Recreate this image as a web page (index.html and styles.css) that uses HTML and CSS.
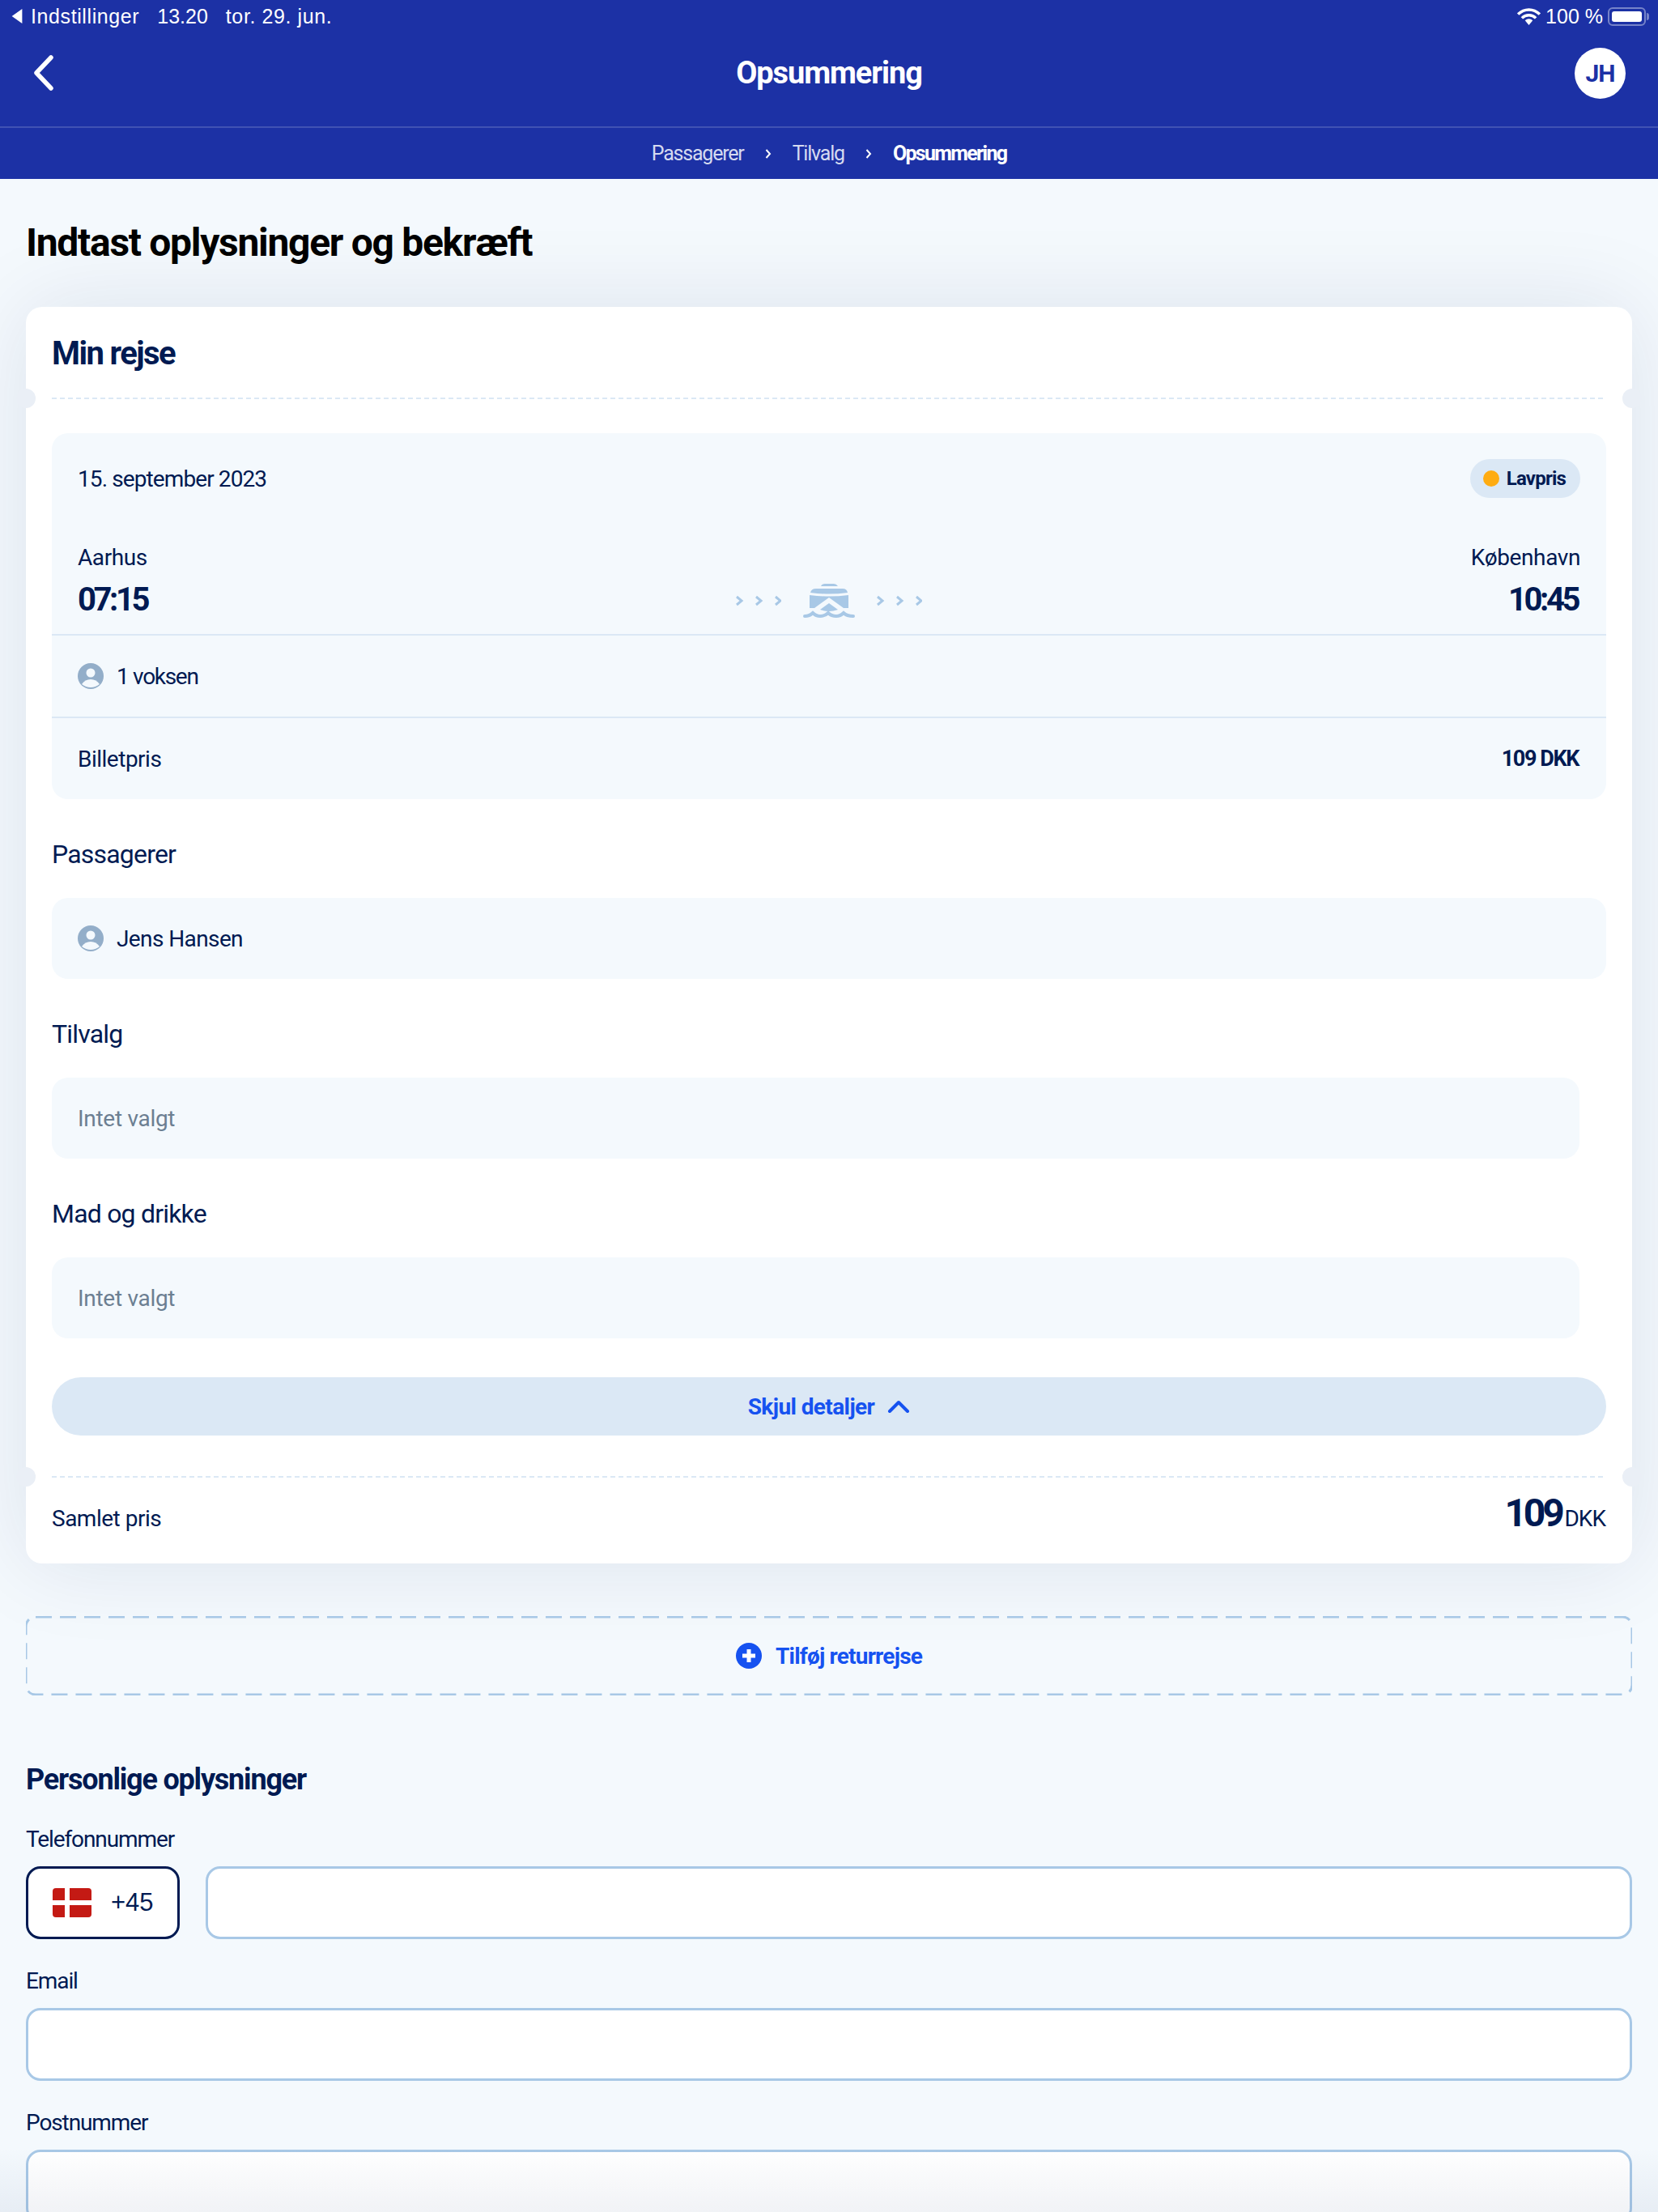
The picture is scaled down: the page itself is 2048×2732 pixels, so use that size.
FILE: index.html
```html
<!DOCTYPE html>
<html lang="da">
<head>
<meta charset="utf-8">
<title>Opsummering</title>
<link rel="stylesheet" href="styles.css">
</head>
<body>
<div class="page">
  <header class="app-header">
    <div class="status">
      <div class="status-left">
        <svg class="status-back" viewBox="0 0 16 22"><path d="M15 1 V21 L1 11 Z" fill="#fff"/></svg>
        <span class="status-wide">Indstillinger</span>
        <span>13.20</span>
        <span class="status-wide">tor. 29. jun.</span>
      </div>
      <div class="status-right">
        <svg class="wifi" viewBox="0 0 30 22"><path d="M1 8 C9 0 21 0 29 8 M6 13 C11 8 19 8 24 13" fill="none" stroke="#fff" stroke-width="3.6"/><path d="M10 16 C13 13 17 13 20 16 L15 22 Z" fill="#fff"/></svg>
        <span>100 %</span>
        <span class="battery"><span class="battery-fill"></span></span>
        <span class="battery-nub"></span>
      </div>
    </div>
    <div class="topbar">
      <svg class="back" viewBox="0 0 24 44"><path d="M21 3 L3 22 L21 41" fill="none" stroke="#fff" stroke-width="5.5" stroke-linecap="round" stroke-linejoin="round"/></svg>
      <h2 class="topbar-title">Opsummering</h2>
      <div class="avatar">JH</div>
    </div>
    <nav class="crumbs">
      <span>Passagerer</span>
      <svg class="crumb-sep" viewBox="0 0 8 14"><path d="M1.5 2 L6 7 L1.5 12" fill="none" stroke="#fff" stroke-width="2"/></svg>
      <span>Tilvalg</span>
      <svg class="crumb-sep" viewBox="0 0 8 14"><path d="M1.5 2 L6 7 L1.5 12" fill="none" stroke="#fff" stroke-width="2"/></svg>
      <strong>Opsummering</strong>
    </nav>
  </header>

  <main class="main">
    <h1 class="page-title">Indtast oplysninger og bekræft</h1>

    <section class="card">
      <h2 class="card-title">Min rejse</h2>
      <div class="ticket-line"><i class="notch notch-l"></i><i class="notch notch-r"></i></div>

      <div class="card-body">
        <div class="trip">
          <div class="trip-top">
            <div class="trip-date">15. september 2023</div>
            <div class="badge"><i class="badge-dot"></i>Lavpris</div>
          </div>
          <div class="route">
            <div class="stop">
              <div class="stop-name">Aarhus</div>
              <div class="stop-time">07:15</div>
            </div>
            <div class="route-mid">
              <svg class="chevs" viewBox="0 0 56 16"><path d="M1 3 L7 8 L1 13 M25 3 L31 8 L25 13 M49 3 L55 8 L49 13" fill="none" stroke="#a8c8e6" stroke-width="3"/></svg>
              <svg class="ferry" viewBox="0 0 64 44">
                <path d="M22 4 Q23 1 27 1 H38 Q41 1 43 4 Z" fill="#a8c8e6"/>
                <path d="M9 12 Q10 7 16 7 H49 Q54 7 55 12 Q32 15 9 12 Z" fill="#a8c8e6"/>
                <path d="M8 15 Q32 18 56 15 V31 H50 L32 18 L14 31 H8 Z" fill="#a8c8e6"/>
                <path d="M32 25 L43 33 Q37 35 32 35 Q27 35 21 33 Z" fill="#a8c8e6"/>
                <path d="M2 41 Q8 41 12 37 Q16 41 21 41 Q27 41 31 37 Q35 41 41 41 Q46 41 50 37 Q54 41 62 41" fill="none" stroke="#a8c8e6" stroke-width="4" stroke-linecap="round"/>
              </svg>
              <svg class="chevs" viewBox="0 0 56 16"><path d="M1 3 L7 8 L1 13 M25 3 L31 8 L25 13 M49 3 L55 8 L49 13" fill="none" stroke="#a8c8e6" stroke-width="3"/></svg>
            </div>
            <div class="stop stop-end">
              <div class="stop-name">København</div>
              <div class="stop-time">10:45</div>
            </div>
          </div>
          <div class="trip-row">
            <svg class="person" viewBox="0 0 32 32"><circle cx="16" cy="16" r="16" fill="#93aec9"/><circle cx="16" cy="12" r="5.5" fill="#f4f9fd"/><path d="M5 26 Q9 20 16 20 Q23 20 27 26 Q22 30 16 30 Q10 30 5 26 Z" fill="#f4f9fd"/></svg>
            <span class="voksen">1 voksen</span>
          </div>
          <div class="trip-row trip-row-price">
            <span>Billetpris</span>
            <strong>109 DKK</strong>
          </div>
        </div>

        <h3 class="group-title">Passagerer</h3>
        <div class="info-box info-box-wide">
          <svg class="person" viewBox="0 0 32 32"><circle cx="16" cy="16" r="16" fill="#93aec9"/><circle cx="16" cy="12" r="5.5" fill="#f4f9fd"/><path d="M5 26 Q9 20 16 20 Q23 20 27 26 Q22 30 16 30 Q10 30 5 26 Z" fill="#f4f9fd"/></svg>
          <span>Jens Hansen</span>
        </div>

        <h3 class="group-title">Tilvalg</h3>
        <div class="info-box info-box-muted">Intet valgt</div>

        <h3 class="group-title">Mad og drikke</h3>
        <div class="info-box info-box-muted">Intet valgt</div>

        <button class="toggle" type="button">
          <span>Skjul detaljer</span>
          <svg class="toggle-icon" viewBox="0 0 28 16"><path d="M3 14 L14 3 L25 14" fill="none" stroke="#1652f0" stroke-width="4" stroke-linecap="round" stroke-linejoin="round"/></svg>
        </button>
      </div>

      <div class="ticket-line ticket-line-low"><i class="notch notch-l"></i><i class="notch notch-r"></i></div>

      <div class="total">
        <span class="total-label">Samlet pris</span>
        <span class="total-price"><b>109</b> <small>DKK</small></span>
      </div>
    </section>

    <button class="add-return" type="button">
      <svg class="dash-frame" width="100%" height="100%"><rect x="0" y="1" width="100%" height="96" rx="12" fill="none" stroke="#a8c8e6" stroke-width="3" stroke-dasharray="20 10"/></svg>
      <svg class="plus" viewBox="0 0 32 32"><circle cx="16" cy="16" r="16" fill="#1652f0"/><path d="M16 8 V24 M8 16 H24" stroke="#fff" stroke-width="5"/></svg>
      <span>Tilføj returrejse</span>
    </button>

    <section class="form">
      <h2 class="form-title">Personlige oplysninger</h2>
      <div class="field">
        <label class="field-label">Telefonnummer</label>
        <div class="phone">
          <div class="country">
            <svg class="flag" viewBox="0 0 48 36"><rect width="48" height="36" rx="4" fill="#c41a14"/><path d="M15 0 H21 V36 H15 Z M0 15 H48 V21 H0 Z" fill="#fff"/></svg>
            <span>+45</span>
          </div>
          <div class="input input-grow"></div>
        </div>
      </div>
      <div class="field">
        <label class="field-label">Email</label>
        <div class="input"></div>
      </div>
      <div class="field">
        <label class="field-label">Postnummer</label>
        <div class="input"></div>
      </div>
    </section>
  </main>
  <div class="bottom-fade"></div>
</div>
</body>
</html>
```

FILE: styles.css
```css
* { box-sizing: border-box; }
html, body { margin: 0; padding: 0; }
body {
  font-family: Roboto, "Liberation Sans", sans-serif;
  color: #001a52;
  background: #f4f9fd;
}
.page { position: relative; height: 2732px; overflow: hidden; }

.app-header { position: relative; z-index: 2; height: 221px; background: #1c31a5; color: #fff; }
.status {
  height: 40px; display: flex; justify-content: space-between; align-items: center;
  padding: 0 11px 0 13px;
  font-family: "Liberation Sans", sans-serif; font-size: 25px;
}
.status-left { display: flex; align-items: center; gap: 22px; }
.status-wide { letter-spacing: .6px; }
.status-back { width: 16px; height: 20px; margin-right: -13px; }
.status-right { display: flex; align-items: center; }
.wifi { width: 29px; height: 21px; margin-right: 6px; }
.battery {
  width: 47px; height: 23px; margin-left: 6px; padding: 3px;
  border: 2px solid rgba(255,255,255,.4); border-radius: 6px; display: block;
}
.battery-fill { display: block; height: 100%; background: #fff; border-radius: 3px; }
.battery-nub { width: 3px; height: 9px; margin-left: 1px; background: rgba(255,255,255,.4); border-radius: 0 3px 3px 0; }

.topbar {
  height: 118px; position: relative; display: flex; align-items: center; justify-content: space-between;
  padding: 0 40px 16px 42px; border-bottom: 2px solid #4052b3;
}
.back { width: 24px; height: 44px; }
.topbar-title {
  margin: 0; position: absolute; left: 0; right: 0; top: 26px; text-align: center;
  font-size: 38px; line-height: 48px; font-weight: 700; letter-spacing: -1.1px;
}
.avatar {
  width: 63px; height: 63px; border-radius: 50%; background: #fff; color: #1c31a5;
  display: flex; align-items: center; justify-content: center; font-size: 30px; font-weight: 700; letter-spacing: -1px;
}
.crumbs {
  height: 63px; display: flex; align-items: center; justify-content: center; gap: 26px;
  font-size: 25px; color: #d5daf0; letter-spacing: -1.2px;
}
.crumbs strong { color: #fff; font-weight: 700; letter-spacing: -1.7px; }
.crumb-sep { width: 8px; height: 14px; }

.main { padding: 55px 32px 0; }
.page-title { margin: 0 0 55px; font-size: 48px; line-height: 48px; font-weight: 700; color: #000; letter-spacing: -1.3px; }

.card {
  background: #fff; border-radius: 20px; box-shadow: 0 0 110px rgba(0,30,90,.1);
}
.card-title { margin: 0; height: 112px; padding: 2px 32px 0; display: flex; align-items: center; font-size: 40px; font-weight: 700; letter-spacing: -1.6px; }
.ticket-line { position: relative; height: 2px; margin: 0 36px 0 32px; border-top: 2px dashed #dbe8f5; }
.notch { position: absolute; top: -13px; width: 24px; height: 24px; border-radius: 50%; background: #eaeff6; }
.notch-l { left: -44px; }
.notch-r { right: -48px; }
.card-body { padding: 42px 32px 50px; }

.trip { background: #f4f9fd; border-radius: 20px; }
.trip-top { display: flex; justify-content: space-between; align-items: center; padding: 32px 32px 0; }
.trip-date { font-size: 28px; letter-spacing: -.9px; }
.badge {
  height: 48px; padding: 0 18px 0 16px; border-radius: 24px; background: #dbe8f5;
  display: flex; align-items: center; gap: 9px; font-size: 24px; font-weight: 700; letter-spacing: -.8px;
}
.badge-dot { width: 20px; height: 20px; border-radius: 50%; background: #ffac12; }
.route { display: grid; grid-template-columns: 1fr auto 1fr; align-items: end; padding: 56px 32px 21px; border-bottom: 2px solid #dbe8f5; }
.stop-name { font-size: 28px; line-height: 36px; letter-spacing: -.4px; }
.stop-time { margin-top: 12px; margin-bottom: -1px; font-size: 40px; line-height: 44px; font-weight: 700; letter-spacing: -3.4px; }
.stop-end { text-align: right; }
.stop-end .stop-time { margin-right: 3px; }
.route-mid { display: flex; align-items: center; gap: 27px; margin-bottom: -2px; }
.chevs { width: 56px; height: 16px; }
.ferry { width: 64px; height: 44px; }
.trip-row { height: 102px; display: flex; align-items: center; gap: 16px; padding: 0 32px; font-size: 28px; border-bottom: 2px solid #dbe8f5; }
.trip-row span { letter-spacing: -.5px; }
.trip-row .voksen { letter-spacing: -1.3px; }
.trip-row-price { height: 100px; justify-content: space-between; border-bottom: 0; }
.trip-row-price strong { font-size: 27px; letter-spacing: -1.4px; margin-right: 2px; }
.person { width: 32px; height: 32px; flex: none; }

.group-title { margin: 48px 0 34px; font-size: 32px; line-height: 40px; font-weight: 400; letter-spacing: -.8px; }
.info-box { height: 100px; margin-right: 33px; padding: 0 32px; display: flex; align-items: center; gap: 16px; background: #f4f9fd; border-radius: 20px; font-size: 28px; letter-spacing: -.6px; }
.info-box-wide { margin-right: 0; }
.info-box-muted { color: #6c7f92; letter-spacing: -.3px; }

.toggle {
  margin-top: 48px; width: 100%; height: 72px; border: 0; border-radius: 36px; background: #dbe8f5;
  display: flex; align-items: center; justify-content: center; gap: 16px;
  font: 700 28px Roboto, sans-serif; letter-spacing: -.6px; color: #1652f0;
}
.toggle-icon { width: 28px; height: 16px; }

.total { height: 106px; display: flex; justify-content: space-between; align-items: baseline; padding: 15px 33px 0 32px; }
.total-label { font-size: 28px; letter-spacing: -.5px; }
.total-price b { font-size: 48px; font-weight: 700; letter-spacing: -4.2px; }
.total-price small { font-size: 28px; letter-spacing: -1px; }

.add-return {
  position: relative; margin-top: 65px; width: 100%; height: 98px; border: 0; background: transparent;
  display: flex; align-items: center; justify-content: center; gap: 17px;
  font: 700 28px Roboto, sans-serif; letter-spacing: -.8px; color: #1652f0;
}
.dash-frame { position: absolute; inset: 0; }
.plus { width: 32px; height: 32px; }

.form-title { margin: 82px 0 0; font-size: 36px; line-height: 44px; font-weight: 700; letter-spacing: -1.2px; }
.field { margin-top: 34px; }
.field-label { display: block; margin-bottom: 15px; font-size: 28px; line-height: 36px; letter-spacing: -1.1px; }
.phone { display: flex; gap: 32px; }
.country {
  width: 190px; height: 90px; display: flex; align-items: center; gap: 24px; padding-left: 30px;
  background: #fff; border: 3px solid #001a52; border-radius: 18px; font-family: "Liberation Sans", sans-serif; font-size: 31px;
}
.flag { width: 48px; height: 36px; }
.input { height: 90px; background: #fff; border: 3px solid #a8c8e6; border-radius: 18px; }
.input-grow { flex: 1; }

.bottom-fade {
  position: absolute; left: 0; right: 0; bottom: 0; height: 80px;
  background: linear-gradient(to bottom, rgba(0,30,90,0), rgba(0,30,90,.055));
  pointer-events: none;
}
```
